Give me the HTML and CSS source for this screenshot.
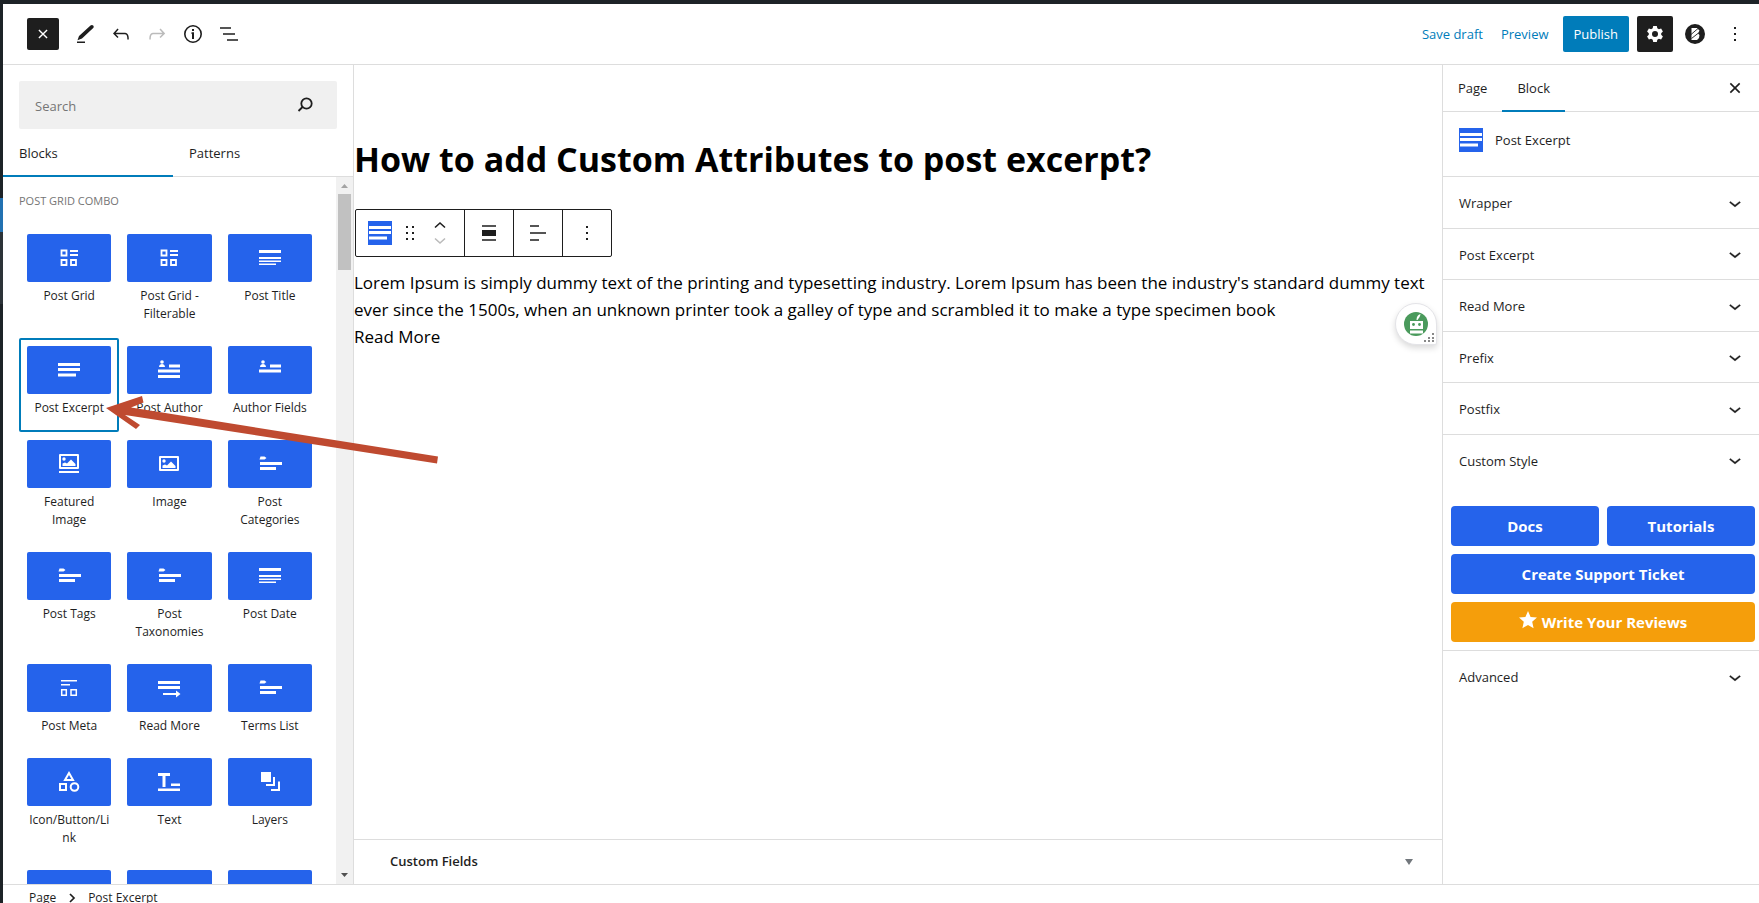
FILE: index.html
```html
<!DOCTYPE html>
<html lang="en">
<head>
<meta charset="utf-8">
<title>Edit Page</title>
<link rel="stylesheet" href="styles.css">
</head>
<body>
<svg class="sprite" aria-hidden="true">
  <symbol id="i-chevron" viewBox="0 0 24 24"><path d="M17.500 11.600L12 16l-5.500-4.400.9-1.200L12 14l4.500-3.600 1 1.200z" stroke="currentColor" stroke-width=".3"/></symbol>
  <symbol id="i-close" viewBox="0 0 24 24"><path d="M5 5l14 14M19 5L5 19" fill="none" stroke="currentColor" stroke-width="2.400"/></symbol>
  <symbol id="i-dots" viewBox="0 0 24 24"><path d="M13 19h-2v-2h2v2zm0-6h-2v-2h2v2zm0-6h-2V5h2v2z"/></symbol>
  <symbol id="i-grid" viewBox="0 0 24 24"><path d="M4.500 4.500h5v5h-5zM4.500 14h5v5h-5zM14 14h5v5h-5z" fill="none" stroke="currentColor" stroke-width="1.800"/><path d="M13 4h8v2h-8zM13 8h8v2h-8z"/></symbol>
  <symbol id="i-title" viewBox="0 0 24 24"><path d="M1 4h22v3H1zM1 11h22v2H1zM1 14.500h22v1.500H1zM1 17.500h17v1.500H1z"/></symbol>
  <symbol id="i-excerpt" viewBox="0 0 24 24"><path d="M1 5h22v3H1zM1 10h22v3H1zM1 15.500h18v3H1z"/></symbol>
  <symbol id="i-author" viewBox="0 0 24 24"><circle cx="5" cy="4" r="1.800"/><path d="M2 9c0-4 6-4 6 0zM12 6.500h11v3H12zM1 11.500h22v3H1zM1 17h22v3H1z"/></symbol>
  <symbol id="i-afields" viewBox="0 0 24 24"><circle cx="5" cy="4" r="1.800"/><path d="M2 9c0-4 6-4 6 0zM12 6.500h11v3H12zM1 11.500h22v3H1z"/></symbol>
  <symbol id="i-featured" viewBox="0 0 24 24"><path d="M3 3h18v13H3z" fill="none" stroke="currentColor" stroke-width="2" stroke-linejoin="round"/><circle cx="7" cy="7" r="1.700"/><path d="M5.500 14v-2.500l2.500-1 2 1 4-4 4.500 4.500v2zM2 19h20v2H2z"/></symbol>
  <symbol id="i-image" viewBox="0 0 24 24"><path d="M3 5h18v13H3z" fill="none" stroke="currentColor" stroke-width="2" stroke-linejoin="round"/><circle cx="7" cy="9" r="1.700"/><path d="M5.500 16v-2.500l2.500-1 2 1 4-4 4.500 4.500v2z"/></symbol>
  <symbol id="i-tags" viewBox="0 0 24 24"><path d="M2.500 4.500h4l2 1.500-2 1.500h-5zM2 10h22v3H2zM2 15h16v3H2z"/></symbol>
  <symbol id="i-meta" viewBox="0 0 24 24"><path d="M4 4h16v1.500H4zM4 8h9v1.500H4z"/><path d="M4.700 13.700h4.600v5.600H4.700zM14 13.700h5.300v5.600H14z" fill="none" stroke="currentColor" stroke-width="1.500"/></symbol>
  <symbol id="i-more" viewBox="0 0 24 24"><path d="M1 5h22v3H1zM1 10h22v3H1zM6 17h13v-2.500l4.500 3.500-4.500 3.500V19H6z"/></symbol>
  <symbol id="i-shapes" viewBox="0 0 24 24"><path d="M12 3l4 7H8zM3 14h6v6H3z" fill="none" stroke="currentColor" stroke-width="2"/><circle cx="17.500" cy="17" r="3.800" fill="none" stroke="currentColor" stroke-width="2"/></symbol>
  <symbol id="i-text" viewBox="0 0 24 24"><path d="M1 3h12v3H8.500v11h-3V6H1zM14 13.500h9v2.500h-9zM1 18.500h22V21H1z"/></symbol>
  <symbol id="i-layers" viewBox="0 0 24 24"><path d="M3 2h10v10H3zM15 7h2v9H8v-2h7zM20 11.500h2V21h-9v-2h7z"/></symbol>
</svg>

<div class="app">
  <header class="header">
    <div class="header-tools">
      <button class="tool tool-close" aria-label="Close block inserter"><svg class="ico-14"><use href="#i-close"/></svg></button>
      <button class="tool" aria-label="Tools"><svg viewBox="0 0 24 24"><path d="M17.500 3.500c.8-.8 2-.8 2.700 0s.7 1.800 0 2.500L9 16.500l-4.500 1.800L6 14zM4 19.500h8V21H4z"/></svg></button>
      <button class="tool" aria-label="Undo"><svg viewBox="0 0 24 24"><path d="M18.300 11.700c-.6-.6-1.400-.9-2.300-.9H6.700l2.900-3.300-1.100-1-4.500 5L8.500 16l1-1-2.700-2.700H16c.5 0 .9.200 1.300.5 1 1 1 3.400 1 4.500v.3h1.500v-.2c0-1.500 0-4.300-1.500-5.700z"/></svg></button>
      <button class="tool tool-off" aria-label="Redo"><svg viewBox="0 0 24 24"><path d="M15.600 6.500l-1.100 1 2.900 3.300H8c-.9 0-1.700.3-2.300.9-1.400 1.500-1.400 4.200-1.400 5.600v.2h1.500v-.3c0-1.100 0-3.500 1-4.500.3-.3.700-.5 1.300-.5h9.200L14.500 15l1.100 1.100 4.600-4.600-4.600-5z"/></svg></button>
      <button class="tool" aria-label="Details"><svg viewBox="0 0 24 24"><circle cx="12" cy="12" r="8.200" fill="none" stroke="currentColor" stroke-width="1.600"/><path d="M11 7h2v2h-2zM10.500 10.300H13V17h-2v-5h-.5z"/></svg></button>
      <button class="tool" aria-label="List View"><svg viewBox="0 0 24 24"><path d="M3 5.200h11v1.600H3zM6 11.200h12v1.600H6zM10 17.200h11v1.600H10z"/></svg></button>
    </div>
    <div class="header-actions">
      <button class="link-btn">Save draft</button>
      <button class="link-btn">Preview</button>
      <button class="publish">Publish</button>
      <button class="gear" aria-label="Settings"><svg viewBox="0 0 24 24"><path fill-rule="evenodd" d="M10.200 4h3.600l.5 2.300 1.600.9 2.200-.7 1.800 3.100-1.700 1.600v1.600l1.700 1.600-1.800 3.100-2.200-.7-1.600.9-.5 2.300h-3.600l-.5-2.300-1.600-.9-2.200.7-1.800-3.100 1.700-1.600v-1.600L4.100 9.600l1.800-3.100 2.200.7 1.600-.9zM12 9a3 3 0 1 0 0 6 3 3 0 0 0 0-6z"/></svg></button>
      <button class="plugin" aria-label="Blocks plugin"><svg viewBox="0 0 20 20"><circle cx="10" cy="10" r="10"/><path d="M6.500 4H12l2.500 2.500L13 9.500l1.500 1.500-.5 3-2 2H6.500z" fill="#fff"/><path d="M6 10.500L13 4.500M6.500 14.500L13.500 9" stroke="#1e1e1e" stroke-width=".9"/></svg></button>
      <button class="more" aria-label="Options"><svg><use href="#i-dots"/></svg></button>
    </div>
  </header>

  <div class="body">
    <aside class="inserter">
      <div class="search">
        <input type="search" placeholder="Search" aria-label="Search for blocks and patterns">
        <svg viewBox="0 0 24 24"><circle cx="13.500" cy="10.500" r="5.200" fill="none" stroke="currentColor" stroke-width="1.800"/><path d="M9.500 14l-4 4" stroke="currentColor" stroke-width="1.800"/></svg>
      </div>
      <div class="ins-tabs" role="tablist">
        <button role="tab" aria-selected="true" class="ins-tab active">Blocks</button>
        <button role="tab" aria-selected="false" class="ins-tab">Patterns</button>
      </div>
      <div class="ins-scroll">
        <div class="ins-list">
          <h2>Post Grid Combo</h2>
          <div class="blocks">
            <button class="block"><span class="tile"><svg><use href="#i-grid"/></svg></span><span class="label">Post Grid</span></button>
            <button class="block"><span class="tile"><svg><use href="#i-grid"/></svg></span><span class="label">Post Grid - Filterable</span></button>
            <button class="block"><span class="tile"><svg><use href="#i-title"/></svg></span><span class="label">Post Title</span></button>
            <button class="block selected"><span class="tile"><svg><use href="#i-excerpt"/></svg></span><span class="label">Post Excerpt</span></button>
            <button class="block"><span class="tile"><svg><use href="#i-author"/></svg></span><span class="label">Post Author</span></button>
            <button class="block"><span class="tile"><svg><use href="#i-afields"/></svg></span><span class="label">Author Fields</span></button>
            <button class="block"><span class="tile"><svg><use href="#i-featured"/></svg></span><span class="label">Featured Image</span></button>
            <button class="block"><span class="tile"><svg><use href="#i-image"/></svg></span><span class="label">Image</span></button>
            <button class="block"><span class="tile"><svg><use href="#i-tags"/></svg></span><span class="label">Post Categories</span></button>
            <button class="block"><span class="tile"><svg><use href="#i-tags"/></svg></span><span class="label">Post Tags</span></button>
            <button class="block"><span class="tile"><svg><use href="#i-tags"/></svg></span><span class="label">Post Taxonomies</span></button>
            <button class="block"><span class="tile"><svg><use href="#i-title"/></svg></span><span class="label">Post Date</span></button>
            <button class="block"><span class="tile"><svg><use href="#i-meta"/></svg></span><span class="label">Post Meta</span></button>
            <button class="block"><span class="tile"><svg><use href="#i-more"/></svg></span><span class="label">Read More</span></button>
            <button class="block"><span class="tile"><svg><use href="#i-tags"/></svg></span><span class="label">Terms List</span></button>
            <button class="block"><span class="tile"><svg><use href="#i-shapes"/></svg></span><span class="label">Icon/Button/Link</span></button>
            <button class="block"><span class="tile"><svg><use href="#i-text"/></svg></span><span class="label">Text</span></button>
            <button class="block"><span class="tile"><svg><use href="#i-layers"/></svg></span><span class="label">Layers</span></button>
            <button class="block" aria-label="Block"><span class="tile"></span></button>
            <button class="block" aria-label="Block"><span class="tile"></span></button>
            <button class="block" aria-label="Block"><span class="tile"></span></button>
          </div>
        </div>
        <div class="scrollbar" aria-hidden="true">
          <svg class="sb-arrow" viewBox="0 0 17 17"><path d="M5 11h7L8.500 7z" fill="#a3a3a3"/></svg>
          <div class="thumb"></div>
          <svg class="sb-arrow sb-down" viewBox="0 0 17 17"><path d="M5 6h7l-3.500 4z" fill="#505050"/></svg>
        </div>
      </div>
    </aside>

    <main class="content">
      <div class="canvas">
        <h1>How to add Custom Attributes to post excerpt?</h1>
        <div class="toolbar" role="toolbar" aria-label="Block tools">
          <div class="tb-group tb-main">
            <button class="tb-type" aria-label="Post Excerpt"><svg><use href="#i-excerpt"/></svg></button>
            <button class="tb-drag" aria-label="Drag"><svg viewBox="0 0 24 24"><path d="M8 5h2v2H8zM14 5h2v2h-2zM8 11h2v2H8zM14 11h2v2h-2zM8 17h2v2H8zM14 17h2v2h-2z"/></svg></button>
            <div class="movers">
              <button aria-label="Move up"><svg viewBox="0 0 12 8"><path d="M1 6.500L6 2l5 4.500" fill="none" stroke="currentColor" stroke-width="1.600"/></svg></button>
              <button aria-label="Move down" disabled><svg viewBox="0 0 12 8"><path d="M1 1.500L6 6l5-4.500" fill="none" stroke="currentColor" stroke-width="1.600"/></svg></button>
            </div>
          </div>
          <div class="tb-group"><button aria-label="Align"><svg viewBox="0 0 24 24"><path d="M5 4.200h14v1.600H5zM5 9h14v6H5zM5 18.200h14v1.600H5z"/></svg></button></div>
          <div class="tb-group"><button aria-label="Align text"><svg viewBox="0 0 24 24"><path d="M4 4.200h9v1.600H4zM4 11.200h16v1.600H4zM4 18.200h9v1.600H4z"/></svg></button></div>
          <div class="tb-group"><button aria-label="Options"><svg><use href="#i-dots"/></svg></button></div>
        </div>
        <p class="excerpt">Lorem Ipsum is simply dummy text of the printing and typesetting industry. Lorem Ipsum has been the industry's standard dummy text ever since the 1500s, when an unknown printer took a galley of type and scrambled it to make a type specimen book<br>Read More</p>
        <button class="bot" aria-label="Writing assistant">
          <svg viewBox="0 0 40 40">
            <circle cx="20" cy="20" r="12" fill="#4a9a5c"/>
            <path d="M14 17h13v8H14zM14 26.500h13v3H14z" fill="#fff"/>
            <path d="M20.500 16c0-3 1.500-5.500 4-6-.3 2.500-1.500 4-3 6z" fill="#fff"/>
            <circle cx="17.500" cy="20.500" r="1.400" fill="#4a9a5c"/><circle cx="23.500" cy="20.500" r="1.400" fill="#4a9a5c"/>
            <path d="M36 29h2v2h-2zM32 33h2v2h-2zM36 33h2v2h-2zM28 36h2v2h-2zM32 36h2v2h-2zM36 36h2v2h-2z" fill="#888"/>
          </svg>
        </button>
      </div>
      <button class="metabox"><span>Custom Fields</span><svg viewBox="0 0 8 6"><path d="M0 0h8L4 6z"/></svg></button>
    </main>

    <aside class="settings">
      <div class="set-tabs" role="tablist">
        <button role="tab" aria-selected="false" class="set-tab">Page</button>
        <button role="tab" aria-selected="true" class="set-tab active">Block</button>
        <button class="set-close" aria-label="Close settings"><svg class="ico-16"><use href="#i-close"/></svg></button>
      </div>
      <div class="card"><span class="card-ico"><svg><use href="#i-excerpt"/></svg></span><h2>Post Excerpt</h2></div>
      <button class="panel"><span>Wrapper</span><svg><use href="#i-chevron"/></svg></button>
      <button class="panel"><span>Post Excerpt</span><svg><use href="#i-chevron"/></svg></button>
      <button class="panel"><span>Read More</span><svg><use href="#i-chevron"/></svg></button>
      <button class="panel"><span>Prefix</span><svg><use href="#i-chevron"/></svg></button>
      <button class="panel"><span>Postfix</span><svg><use href="#i-chevron"/></svg></button>
      <button class="panel"><span>Custom Style</span><svg><use href="#i-chevron"/></svg></button>
      <div class="links">
        <a href="#docs">Docs</a>
        <a href="#tutorials">Tutorials</a>
        <a href="#support" class="wide">Create Support Ticket</a>
        <a href="#reviews" class="wide review"><svg viewBox="0 0 18 18"><path d="M9 0l2.600 5.900 6.400.6-4.800 4.300 1.400 6.400L9 13.900l-5.600 3.300 1.400-6.400L0 6.500l6.400-.6z"/></svg>Write Your Reviews</a>
      </div>
      <button class="panel"><span>Advanced</span><svg><use href="#i-chevron"/></svg></button>
    </aside>
  </div>

  <footer class="footer">
    <a href="#page">Page</a>
    <svg viewBox="0 0 8 10"><path d="M2 1l4 4-4 4" fill="none" stroke="currentColor" stroke-width="1.700"/></svg>
    <a href="#excerpt">Post Excerpt</a>
  </footer>

  <svg class="pointer" viewBox="0 0 340 80" aria-hidden="true"><path d="M1 18L37 6l1.500 6.500L26 17.500l307 49-1 7L20 25l15 10-4 4z"/></svg>
</div>
</body>
</html>
```
FILE: styles.css
```css
* { box-sizing: border-box; }
body {
  margin: 0;
  height: 100vh;
  overflow: hidden;
  background: #fff;
  color: #1e1e1e;
  font: 13px/1.5 "Open Sans", "Noto Sans", sans-serif;
}
button {
  border: 0;
  padding: 0;
  background: none;
  color: inherit;
  font: inherit;
  cursor: pointer;
}
h1, h2, p { margin: 0; }
a { color: inherit; text-decoration: none; }
svg { display: block; width: 24px; height: 24px; fill: currentColor; flex: none; }
.ico-16 { width: 16px; height: 16px; }
.ico-14 { width: 14px; height: 14px; }
.sprite { position: absolute; width: 0; height: 0; }

.app {
  position: relative;
  display: flex;
  flex-direction: column;
  height: 100vh;
  border-top: 4px solid #1d2327;
}
.app::before {
  content: "";
  position: absolute;
  left: 0;
  top: 0;
  bottom: 0;
  width: 3px;
  background: linear-gradient(#1d2327 194px, #2271b1 194px, #2271b1 228px, #2c3338 228px, #2c3338 300px, #1d2327 300px);
}

.header {
  display: flex;
  justify-content: space-between;
  align-items: center;
  height: 61px;
  margin-left: 3px;
  padding: 0 6px 0 24px;
  border-bottom: 1px solid #ddd;
  flex: none;
}
.header-tools { display: flex; align-items: center; gap: 4px; }
.tool { display: grid; place-items: center; width: 32px; height: 32px; }
.tool-close { background: #1e1e1e; color: #fff; border-radius: 2px; margin-right: 6px; }
.tool-off { color: #bbb; }
.header-actions { display: flex; align-items: center; }
.link-btn { color: #007cba; padding: 2px 9px 0; }
.publish { height: 36px; padding: 2px 11px 0; margin: 0 8px 0 5px; background: #007cba; color: #fff; border-radius: 2px; }
.gear, .plugin, .more { display: grid; place-items: center; width: 36px; height: 36px; }
.gear { background: #1e1e1e; color: #fff; border-radius: 2px; }
.plugin { margin: 0 4px; }
.plugin svg { width: 20px; height: 20px; }

.body { display: flex; flex: 1; min-height: 0; margin-left: 3px; }

.inserter {
  display: flex;
  flex-direction: column;
  width: 351px;
  flex: none;
  border-right: 1px solid #ddd;
}
.search {
  display: flex;
  align-items: center;
  height: 48px;
  margin: 16px 16px 0;
  padding: 0 20px 0 16px;
  background: #f0f0f0;
  border-radius: 2px;
  flex: none;
}
.search input { flex: 1; min-width: 0; border: 0; outline: 0; padding: 3px 0 0; background: none; font: inherit; }
.search input::placeholder { color: #757575; }
.ins-tabs { display: flex; height: 48px; border-bottom: 1px solid #ddd; flex: none; }
.ins-tab { width: 170px; padding: 2px 16px 0; text-align: left; font-weight: 500; }
.ins-tab.active { box-shadow: inset 0 -1px #007cba, 0 1px #007cba; }
.ins-scroll { display: flex; flex: 1; min-height: 0; }
.ins-list { flex: 1; min-width: 0; padding: 16px 16px 0; overflow: hidden; }
.ins-list h2 {
  height: 33px;
  color: #757575;
  font-size: 11px;
  line-height: 16px;
  font-weight: 500;
  text-transform: uppercase;
}
.blocks { display: grid; grid-template-columns: repeat(3, 1fr); }
.block { display: flex; flex-direction: column; padding: 8px 8px 15px; border-radius: 2px; min-width: 0; }
.block.selected { box-shadow: inset 0 0 0 2px #007cba; }
.tile {
  display: grid;
  place-items: center;
  width: 100%;
  height: 48px;
  background: #2563eb;
  color: #fff;
  border-radius: 2px;
}
.label { width: 100%; padding: 5px 2px 0; font-size: 12px; line-height: 18px; overflow-wrap: anywhere; }
.scrollbar { display: flex; flex-direction: column; width: 17px; background: #f1f1f1; }
.sb-arrow { width: 17px; height: 17px; }
.sb-down { margin-top: auto; }
.thumb { height: 76px; margin: 0 2px; background: #c1c1c1; }

.content { display: flex; flex-direction: column; flex: 1; min-width: 0; }
.canvas { position: relative; flex: 1; color: #000; padding-top: 69px; }
h1 { font-size: 34px; line-height: 50px; white-space: nowrap; }
.toolbar {
  display: flex;
  width: max-content;
  height: 48px;
  margin: 25px 0 12px 1px;
  border: 1px solid #1e1e1e;
  border-radius: 2px;
  color: #1e1e1e;
}
.tb-group { display: flex; align-items: center; padding: 0 12px; }
.tb-group + .tb-group { border-left: 1px solid #1e1e1e; }
.tb-type { background: #2563eb; color: #fff; }
.tb-main { gap: 6px; padding: 0 6px 0 12px; }
.movers { display: flex; flex-direction: column; gap: 8px; margin-left: 6px; width: 24px; }
.movers svg { width: 12px; height: 8px; }
.movers button:disabled { color: #bbb; }
.excerpt { font-size: 17px; line-height: 27px; }
.bot {
  position: absolute;
  right: 5px;
  top: 238px;
  width: 42px;
  height: 42px;
  background: #fff;
  border: 1px solid #e4e4e8;
  border-radius: 21px 21px 2px 21px;
  box-shadow: 0 3px 6px rgba(0, 0, 0, .15);
}
.bot svg { width: 40px; height: 40px; }
.metabox {
  display: flex;
  align-items: center;
  justify-content: space-between;
  height: 45px;
  padding: 0 29px 0 36px;
  border-top: 1px solid #ddd;
  font-weight: 600;
}
.metabox svg { width: 8px; height: 6px; color: #72777c; }

.settings { width: 317px; flex: none; border-left: 1px solid #ddd; }
.set-tabs { display: flex; height: 47px; border-bottom: 1px solid #ddd; }
.set-tab { padding: 2px 15px 0; font-weight: 500; }
.set-tab.active { box-shadow: inset 0 -1px #007cba, 0 1px #007cba; }
.set-close { margin-left: auto; padding: 0 16px; }
.card { display: flex; gap: 12px; height: 65px; padding: 16px 16px 0; border-bottom: 1px solid #ddd; }
.card-ico { width: 24px; height: 24px; background: #2563eb; color: #fff; }
.card h2 { font-size: 13px; line-height: 24px; font-weight: 500; }
.panel {
  display: flex;
  align-items: center;
  justify-content: space-between;
  width: 100%;
  padding: 15px 12px 14px 16px;
  font-weight: 500;
}
.panel span { padding-top: 2px; }
.panel svg { margin: -4px 0; }
.panel + .panel { border-top: 1px solid #ddd; }
.links {
  display: grid;
  grid-template-columns: 1fr 1fr;
  gap: 8px;
  padding: 21px 4px 8px 8px;
  border-bottom: 1px solid #ddd;
}
.links a {
  display: flex;
  align-items: center;
  justify-content: center;
  gap: 5px;
  height: 40px;
  border-radius: 4px;
  background: #2563eb;
  color: #fff;
  font-size: 15px;
  font-weight: 700;
}
.links .wide { grid-column: span 2; }
.links .review { background: #f59e0b; }
.links svg { width: 18px; height: 18px; margin-bottom: 4px; }

.footer {
  display: flex;
  align-items: center;
  gap: 12px;
  height: 19px;
  flex: none;
  margin-left: 3px;
  padding: 8px 0 0 26px;
  border-top: 1px solid #ddd;
  overflow: hidden;
  white-space: nowrap;
  font-size: 12px;
}
.footer svg { width: 8px; height: 10px; }

.pointer { position: absolute; left: 105px; top: 386px; width: 340px; height: 80px; }
.pointer path { fill: #bf4a30; }
```
